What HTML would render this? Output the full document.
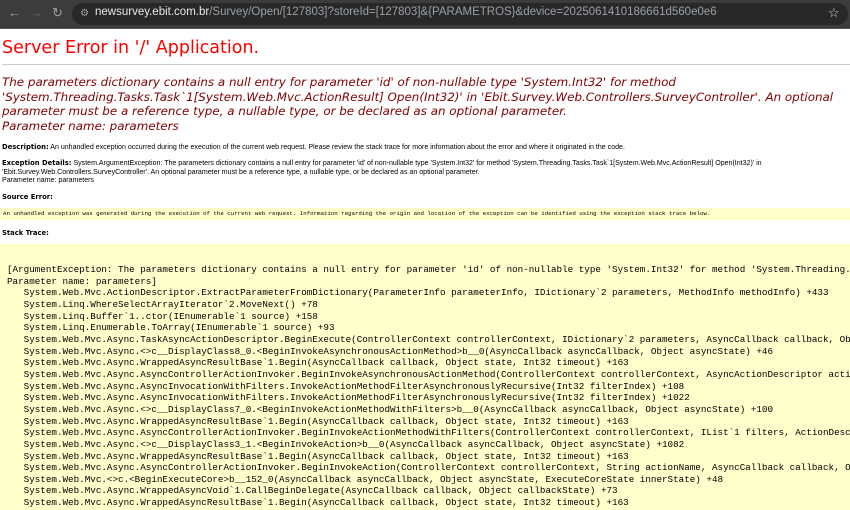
<!DOCTYPE html>
<html style="overflow:hidden;height:510px"><head><meta charset="utf-8"><style>
body{margin:0;width:850px;height:510px;overflow:hidden;background:#fff;font-family:"Liberation Sans",sans-serif;position:relative}
.bar{position:absolute;left:0;top:0;width:850px;height:28px;background:#3c3c3c;border-bottom:1px solid #555}
.pill{position:absolute;left:72px;top:3px;width:776px;height:22px;border-radius:11px;background:#282828}
.url{position:absolute;left:95px;top:6px;font-size:11.5px;color:#e8e8e8;white-space:nowrap}
.url span{color:#9aa0a6}
.nav{position:absolute;top:5px;color:#9aa0a6;font-size:13px}
h1{position:absolute;left:2px;top:38px;margin:0;font:17.5px "DejaVu Sans",sans-serif;color:#f00}
.hr{position:absolute;left:2px;top:64px;width:848px;height:1px;background:#ccc}
h2{position:absolute;left:2px;top:75px;margin:0;font:italic 11.9px/14.5px "DejaVu Sans",sans-serif;color:#800000;white-space:nowrap}
.s{position:absolute;left:2px;font-size:7.05px;line-height:8.5px;color:#000;white-space:nowrap}
.s b{font-family:"DejaVu Sans",sans-serif;font-size:6.8px}
.y1{position:absolute;left:0;top:208px;width:847px;height:12px;background:#ffffcc;font:5.75px/12px "Liberation Mono",monospace;white-space:pre;padding-left:3px;overflow:hidden}
.y2{position:absolute;left:0;top:244px;width:850px;height:266px;background:#ffffcc;overflow:hidden}
pre{position:absolute;left:7px;top:20px;width:843px;overflow:hidden;margin:0;font:9.25px/11.65px "Liberation Mono",monospace;color:#000}
</style></head><body>
<div class="bar">
<div class="nav" style="left:8px">&#8592;</div><div class="nav" style="left:30px;color:#666">&#8594;</div><div class="nav" style="left:52px">&#8635;</div>
<div class="pill"></div>
<div class="nav" style="left:80px;font-size:10px;top:8px">&#9881;</div>
<div class="url">newsurvey.ebit.com.br<span>/Survey/Open/[127803]?storeId=[127803]&amp;{PARAMETROS}&amp;device=2025061410186661d560e0e6</span></div>
<div class="nav" style="left:828px;color:#ddd">&#9734;</div>
</div>
<h1>Server Error in '/' Application.</h1>
<div class="hr"></div>
<h2>The parameters dictionary contains a null entry for parameter 'id' of non-nullable type 'System.Int32' for method<br>'System.Threading.Tasks.Task`1[System.Web.Mvc.ActionResult] Open(Int32)' in 'Ebit.Survey.Web.Controllers.SurveyController'. An optional<br>parameter must be a reference type, a nullable type, or be declared as an optional parameter.<br>Parameter name: parameters</h2>
<div class="s" style="top:143px"><b>Description:</b> An unhandled exception occurred during the execution of the current web request. Please review the stack trace for more information about the error and where it originated in the code.</div>
<div class="s" style="top:159px"><b>Exception Details:</b> System.ArgumentException: The parameters dictionary contains a null entry for parameter 'id' of non-nullable type 'System.Int32' for method 'System.Threading.Tasks.Task`1[System.Web.Mvc.ActionResult] Open(Int32)' in<br>'Ebit.Survey.Web.Controllers.SurveyController'. An optional parameter must be a reference type, a nullable type, or be declared as an optional parameter.<br>Parameter name: parameters</div>
<div class="s" style="top:193px"><b>Source Error:</b></div>
<div class="y1">An unhandled exception was generated during the execution of the current web request. Information regarding the origin and location of the exception can be identified using the exception stack trace below.</div>
<div class="s" style="top:229px"><b>Stack Trace:</b></div>
<div class="y2">
<pre>[ArgumentException: The parameters dictionary contains a null entry for parameter 'id' of non-nullable type 'System.Int32' for method 'System.Threading.Tasks.Task`1
Parameter name: parameters]
   System.Web.Mvc.ActionDescriptor.ExtractParameterFromDictionary(ParameterInfo parameterInfo, IDictionary`2 parameters, MethodInfo methodInfo) +433
   System.Linq.WhereSelectArrayIterator`2.MoveNext() +78
   System.Linq.Buffer`1..ctor(IEnumerable`1 source) +158
   System.Linq.Enumerable.ToArray(IEnumerable`1 source) +93
   System.Web.Mvc.Async.TaskAsyncActionDescriptor.BeginExecute(ControllerContext controllerContext, IDictionary`2 parameters, AsyncCallback callback, Object state)
   System.Web.Mvc.Async.&lt;&gt;c__DisplayClass8_0.&lt;BeginInvokeAsynchronousActionMethod&gt;b__0(AsyncCallback asyncCallback, Object asyncState) +46
   System.Web.Mvc.Async.WrappedAsyncResultBase`1.Begin(AsyncCallback callback, Object state, Int32 timeout) +163
   System.Web.Mvc.Async.AsyncControllerActionInvoker.BeginInvokeAsynchronousActionMethod(ControllerContext controllerContext, AsyncActionDescriptor actionDescriptor
   System.Web.Mvc.Async.AsyncInvocationWithFilters.InvokeActionMethodFilterAsynchronouslyRecursive(Int32 filterIndex) +108
   System.Web.Mvc.Async.AsyncInvocationWithFilters.InvokeActionMethodFilterAsynchronouslyRecursive(Int32 filterIndex) +1022
   System.Web.Mvc.Async.&lt;&gt;c__DisplayClass7_0.&lt;BeginInvokeActionMethodWithFilters&gt;b__0(AsyncCallback asyncCallback, Object asyncState) +100
   System.Web.Mvc.Async.WrappedAsyncResultBase`1.Begin(AsyncCallback callback, Object state, Int32 timeout) +163
   System.Web.Mvc.Async.AsyncControllerActionInvoker.BeginInvokeActionMethodWithFilters(ControllerContext controllerContext, IList`1 filters, ActionDescriptor
   System.Web.Mvc.Async.&lt;&gt;c__DisplayClass3_1.&lt;BeginInvokeAction&gt;b__0(AsyncCallback asyncCallback, Object asyncState) +1082
   System.Web.Mvc.Async.WrappedAsyncResultBase`1.Begin(AsyncCallback callback, Object state, Int32 timeout) +163
   System.Web.Mvc.Async.AsyncControllerActionInvoker.BeginInvokeAction(ControllerContext controllerContext, String actionName, AsyncCallback callback, Object
   System.Web.Mvc.&lt;&gt;c.&lt;BeginExecuteCore&gt;b__152_0(AsyncCallback asyncCallback, Object asyncState, ExecuteCoreState innerState) +48
   System.Web.Mvc.Async.WrappedAsyncVoid`1.CallBeginDelegate(AsyncCallback callback, Object callbackState) +73
   System.Web.Mvc.Async.WrappedAsyncResultBase`1.Begin(AsyncCallback callback, Object state, Int32 timeout) +163</pre>
</div>
</body></html>
